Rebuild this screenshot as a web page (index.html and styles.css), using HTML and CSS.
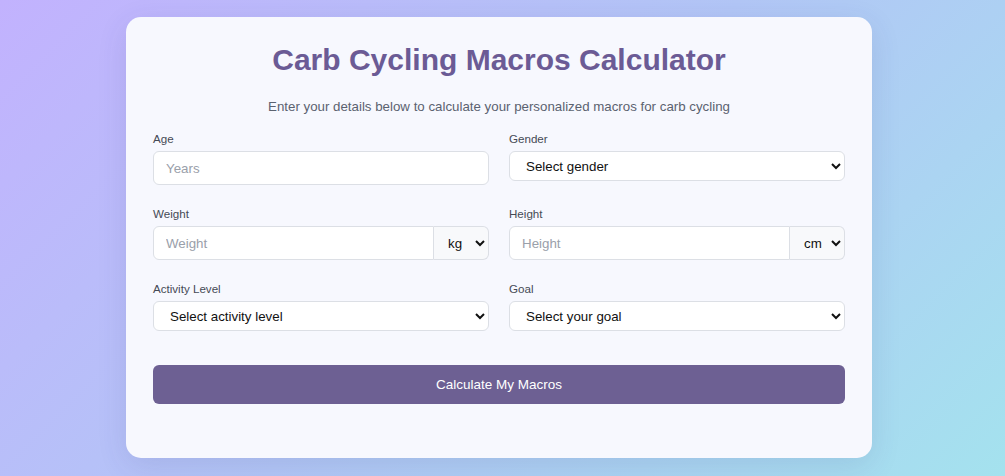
FILE: index.html
```html
<!DOCTYPE html>
<html lang="en">
<head>
<meta charset="utf-8">
<title>Carb Cycling Macros Calculator</title>
<link rel="stylesheet" href="styles.css">
</head>
<body>
<main class="card">
  <h1 class="title">Carb Cycling Macros Calculator</h1>
  <p class="subtitle">Enter your details below to calculate your personalized macros for carb cycling</p>
  <form class="form">
    <div class="grid">
      <div class="field">
        <label class="label" for="age">Age</label>
        <input class="input" id="age" type="number" placeholder="Years">
      </div>
      <div class="field">
        <label class="label" for="gender">Gender</label>
        <select class="select" id="gender">
          <option>Select gender</option>
          <option>Male</option>
          <option>Female</option>
        </select>
      </div>
      <div class="field">
        <label class="label" for="weight">Weight</label>
        <div class="combo">
          <input class="input combo-input" id="weight" type="number" placeholder="Weight">
          <select class="unit">
            <option>kg</option>
            <option>lb</option>
          </select>
        </div>
      </div>
      <div class="field">
        <label class="label" for="height">Height</label>
        <div class="combo">
          <input class="input combo-input" id="height" type="number" placeholder="Height">
          <select class="unit">
            <option>cm</option>
            <option>in</option>
          </select>
        </div>
      </div>
      <div class="field">
        <label class="label" for="activity">Activity Level</label>
        <select class="select" id="activity">
          <option>Select activity level</option>
        </select>
      </div>
      <div class="field">
        <label class="label" for="goal">Goal</label>
        <select class="select" id="goal">
          <option>Select your goal</option>
        </select>
      </div>
    </div>
    <button class="button" type="button">Calculate My Macros</button>
  </form>
</main>
</body>
</html>
```

FILE: styles.css
```css
html, body {
  margin: 0;
  padding: 0;
}

body {
  min-height: 476px;
  background: linear-gradient(135deg, #c2b2fe 0%, #b2c6f6 50%, #a4e2ee 100%);
  font-family: "Liberation Sans", Arial, sans-serif;
  display: flex;
  justify-content: center;
  align-items: flex-start;
  padding: 17px 7px 0 0;
  box-sizing: border-box;
}

.card {
  width: 746px;
  box-sizing: border-box;
  padding: 25px 27px 54px;
  background: #f7f8fe;
  border-radius: 15px;
  box-shadow: 0 8px 30px rgba(60, 60, 120, 0.12);
}

.title {
  margin: 0;
  text-align: center;
  font-size: 30px;
  line-height: 36px;
  font-weight: 700;
  color: #6b5b95;
}

.subtitle {
  margin: 21px 0 0;
  text-align: center;
  font-size: 13.3px;
  line-height: 16px;
  color: #5b6270;
}

.form {
  margin-top: 17px;
}

.grid {
  display: grid;
  grid-template-columns: 1fr 1fr;
  column-gap: 20px;
  row-gap: 22px;
  align-items: start;
}

.field {
  display: flex;
  flex-direction: column;
}

.label {
  font-size: 11.6px;
  line-height: 13px;
  color: #454a55;
  margin-bottom: 6px;
}

.input {
  height: 34px;
  box-sizing: border-box;
  padding: 0 12px;
  border: 1px solid #dcdfe5;
  border-radius: 6px;
  background: #fff;
  font-family: "Liberation Sans", Arial, sans-serif;
  font-size: 13.33px;
  color: #222;
  outline: none;
  -moz-appearance: textfield;
}

.input::-webkit-outer-spin-button,
.input::-webkit-inner-spin-button {
  -webkit-appearance: none;
  margin: 0;
}

.input::placeholder {
  color: #9aa0aa;
}

.select {
  height: 30px;
  box-sizing: border-box;
  padding: 0 8px 0 12px;
  border: 1px solid #dcdfe5;
  border-radius: 6px;
  background: #fff;
  font-family: "Liberation Sans", Arial, sans-serif;
  font-size: 13.33px;
  color: #111;
}

.combo {
  display: flex;
  height: 34px;
}

.combo-input {
  flex: 1;
  min-width: 0;
  border-radius: 6px 0 0 6px;
}

.unit {
  width: 55px;
  box-sizing: border-box;
  padding: 0 4px 0 10px;
  border: 1px solid #dcdfe5;
  border-left: none;
  border-radius: 0 6px 6px 0;
  background: #f8f9fb;
  font-family: "Liberation Sans", Arial, sans-serif;
  font-size: 13.33px;
  color: #111;
}

.button {
  display: block;
  width: 100%;
  height: 39px;
  margin-top: 34px;
  border: none;
  border-radius: 6px;
  background: #6d6093;
  color: #fff;
  font-family: "Liberation Sans", Arial, sans-serif;
  font-size: 13.5px;
  cursor: pointer;
}
```
